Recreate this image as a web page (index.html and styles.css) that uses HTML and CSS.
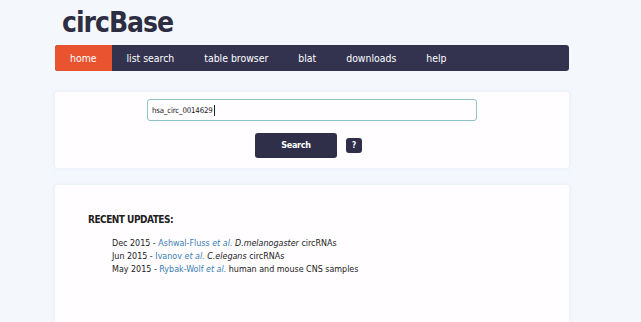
FILE: index.html
```
<!DOCTYPE html>
<html>
<head>
<meta charset="utf-8">
<link rel="stylesheet" href="styles.css">
</head>
<body>
<div class="page">
  <h1 class="logo">circBase</h1>
  <nav class="nav">
    <a class="nav-item active">home</a>
    <a class="nav-item">list search</a>
    <a class="nav-item">table browser</a>
    <a class="nav-item">blat</a>
    <a class="nav-item">downloads</a>
    <a class="nav-item">help</a>
  </nav>
  <section class="panel search-panel">
    <div class="input">hsa_circ_0014629<span class="caret"></span></div>
    <div class="buttons">
      <span class="btn-search">Search</span>
      <span class="btn-help">?</span>
    </div>
  </section>
  <section class="panel updates">
    <h2 class="updates-title">RECENT UPDATES:</h2>
    <ul class="updates-list">
      <li>Dec 2015 - <a class="link">Ashwal-Fluss <i>et al.</i></a> <i>D.melanogaster</i> circRNAs</li>
      <li>Jun 2015 - <a class="link">Ivanov <i>et al.</i></a> <i>C.elegans</i> circRNAs</li>
      <li>May 2015 - <a class="link">Rybak-Wolf <i>et al.</i></a> human and mouse CNS samples</li>
    </ul>
  </section>
</div>
</body>
</html>
```
FILE: styles.css
```
html, body {
  margin: 0;
  padding: 0;
  background: #f4f8fd;
  height: 100%;
}
body {
  font-family: "DejaVu Sans Condensed", "DejaVu Sans", sans-serif;
  font-stretch: condensed;
  color: #222;
  overflow: hidden;
}
.page {
  width: 514px;
  margin-left: 55px;
}
.logo {
  margin: 0;
  padding: 5px 0 0 7px;
  height: 40px;
  font-size: 28px;
  letter-spacing: -1px;
  font-weight: bold;
  color: #2e2e42;
  line-height: 36px;
}
.nav {
  display: flex;
  height: 26px;
  background: #333350;
  border-radius: 3px;
  overflow: hidden;
}
.nav-item {
  padding: 0 15px;
  line-height: 26px;
  font-size: 10.4px;
  color: #fff;
}
.nav-item.active {
  background: #e9532f;
}
.panel {
  background: #fffdff;
  border-radius: 3px;
  box-shadow: 0 0 4px rgba(200, 210, 225, 0.35);
}
.search-panel {
  margin-top: 21px;
  height: 76px;
  padding-top: 7px;
  box-sizing: border-box;
  display: flex;
  flex-direction: column;
  align-items: center;
}
.input {
  width: 330px;
  height: 22px;
  box-sizing: border-box;
  border: 1.5px solid #8fc3c7;
  border-radius: 3px;
  font-size: 7.8px;
  letter-spacing: -0.15px;
  line-height: 19px;
  padding-left: 4px;
  color: #222;
  display: flex;
  align-items: center;
}
.caret {
  display: inline-block;
  width: 1px;
  height: 11px;
  background: #222;
  margin-left: 1px;
}
.buttons {
  margin-top: 12px;
  display: flex;
  align-items: center;
  gap: 9px;
  margin-right: 7px;
}
.btn-search {
  width: 82px;
  height: 25px;
  background: #2f2f49;
  border-radius: 3px;
  color: #fff;
  font-weight: bold;
  font-size: 9px;
  letter-spacing: -0.3px;
  line-height: 25px;
  text-align: center;
}
.btn-help {
  width: 16px;
  height: 15px;
  background: #2f2f49;
  border-radius: 3px;
  color: #fff;
  font-weight: bold;
  font-size: 8px;
  line-height: 15px;
  text-align: center;
}
.updates {
  margin-top: 17px;
  height: 140px;
  padding: 28px 0 0 33px;
  box-sizing: border-box;
}
.updates-title {
  margin: 0;
  font-size: 10px;
  letter-spacing: -0.5px;
  font-weight: bold;
  line-height: 14px;
  color: #1e1e1e;
}
.updates-list {
  list-style: none;
  margin: 10px 0 0 24px;
  padding: 0;
  font-size: 8.9px;
  line-height: 13px;
}
.link {
  color: #3b7db3;
}
```
